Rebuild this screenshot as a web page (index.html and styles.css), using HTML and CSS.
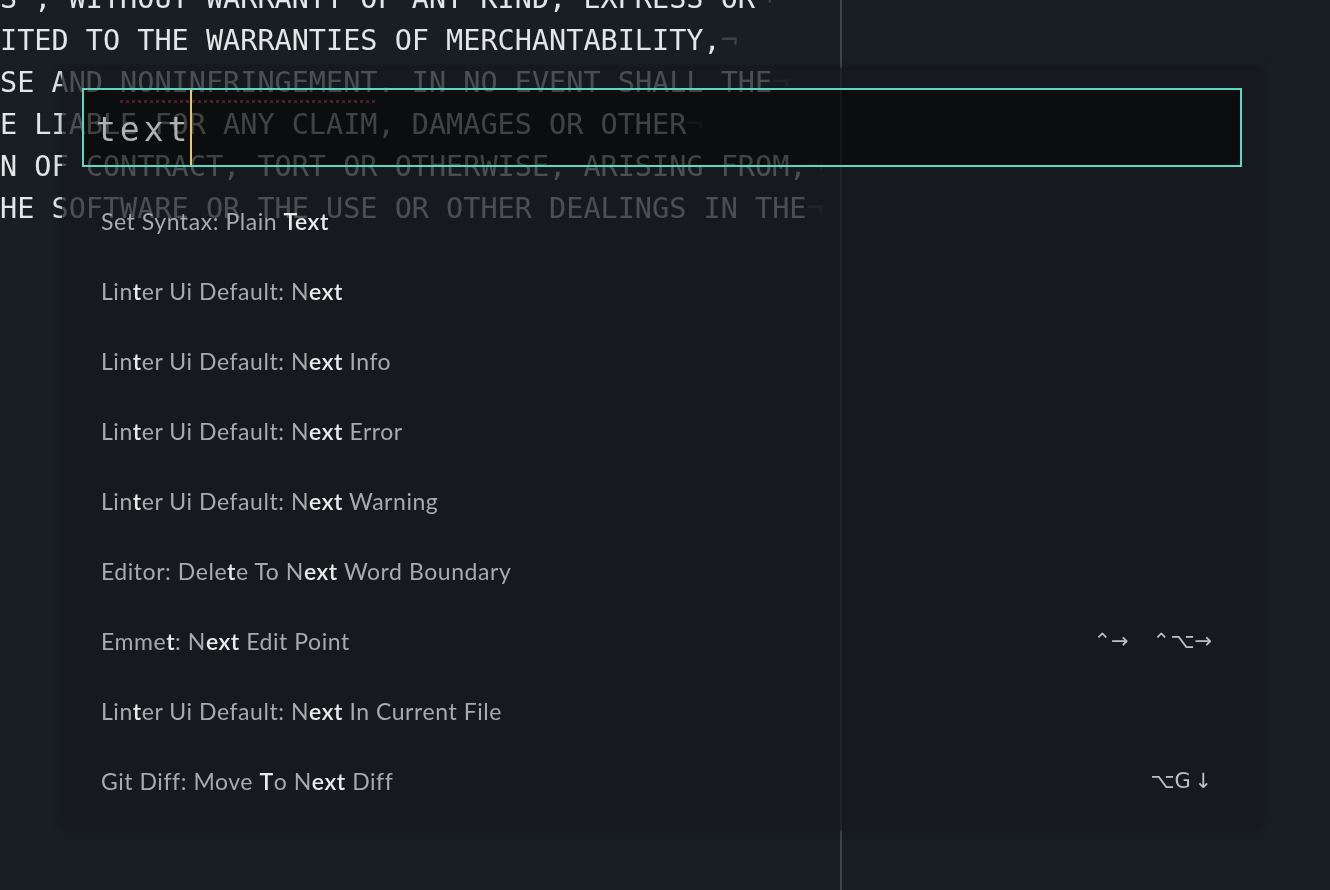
FILE: index.html
```html
<!DOCTYPE html>
<html lang="en">
<head>
<meta charset="utf-8">
<title>Command Palette</title>
<link rel="stylesheet" href="styles.css">
</head>
<body>
<div class="editor">
  <div class="lines">
    <div class="line">S", WITHOUT WARRANTY OF ANY KIND, EXPRESS OR<span class="eol">¬</span></div>
    <div class="line">ITED TO THE WARRANTIES OF MERCHANTABILITY,<span class="eol">¬</span></div>
    <div class="line">SE AND <span class="misspelled">NONINFRINGEMENT</span>. IN NO EVENT SHALL THE<span class="eol">¬</span></div>
    <div class="line">E LIABLE FOR ANY CLAIM, DAMAGES OR OTHER<span class="eol">¬</span></div>
    <div class="line">N OF CONTRACT, TORT OR OTHERWISE, ARISING FROM,<span class="eol">¬</span></div>
    <div class="line">HE SOFTWARE OR THE USE OR OTHER DEALINGS IN THE<span class="eol">¬</span></div>
  </div>
  <div class="wrap-guide"></div>

  <div class="palette">
    <div class="query">
      <span class="query-text">text</span><span class="caret"></span>
    </div>
    <ol class="items">
      <li class="item"><span class="label">Set Syntax: Plain <b>Text</b></span></li>
      <li class="item"><span class="label">Lin<b>t</b>er Ui Default: N<b>ext</b></span></li>
      <li class="item"><span class="label">Lin<b>t</b>er Ui Default: N<b>ext</b> Info</span></li>
      <li class="item"><span class="label">Lin<b>t</b>er Ui Default: N<b>ext</b> Error</span></li>
      <li class="item"><span class="label">Lin<b>t</b>er Ui Default: N<b>ext</b> Warning</span></li>
      <li class="item"><span class="label">Editor: Dele<b>t</b>e To N<b>ext</b> Word Boundary</span></li>
      <li class="item"><span class="label">Emme<b>t</b>: N<b>ext</b> Edit Point</span><span class="keys"><kbd class="key">⌃→</kbd><kbd class="key">⌃⌥→</kbd></span></li>
      <li class="item"><span class="label">Lin<b>t</b>er Ui Default: N<b>ext</b> In Current File</span></li>
      <li class="item"><span class="label">Git Diff: Move <b>T</b>o N<b>ext</b> Diff</span><span class="keys"><kbd class="key key-narrow">⌥G ↓</kbd></span></li>
    </ol>
  </div>
</div>
</body>
</html>
```

FILE: styles.css
```css
html, body {
  margin: 0;
  padding: 0;
  height: 100%;
  background: #181e22;
  overflow: hidden;
}

.editor {
  position: relative;
  width: 1330px;
  height: 890px;
  overflow: hidden;
  background: #181e22;
}

.lines {
  margin-top: -22px;
  font-family: "DejaVu Sans Mono", monospace;
  font-size: 28.5px;
  line-height: 42px;
  color: #e3e6e8;
}

.line {
  height: 42px;
  white-space: pre;
}

.eol {
  color: #3a4347;
}

.misspelled {
  text-decoration: underline dotted #ff6a6a;
  text-decoration-thickness: 3px;
  text-underline-offset: 8px;
}

.wrap-guide {
  position: absolute;
  top: 0;
  bottom: 0;
  left: 840px;
  width: 2px;
  background: #3c454a;
}

.palette {
  position: absolute;
  left: 62px;
  top: 68px;
  width: 1199px;
  box-sizing: border-box;
  padding: 20px 19px 14px 20px;
  background: rgba(21, 26, 30, 0.74);
  border-radius: 0 0 5px 5px;
  box-shadow: 0 0 8px 2px rgba(0, 0, 0, 0.22);
}

.query {
  position: relative;
  display: flex;
  align-items: center;
  height: 79px;
  box-sizing: border-box;
  border: 2px solid #5fd6bd;
  padding: 4px 0 0 12px;
}

.query::before {
  content: "";
  position: absolute;
  inset: 0;
  background: #0b0d0f;
  mix-blend-mode: difference;
}

.query-text {
  position: relative;
  font-family: "DejaVu Sans Mono", monospace;
  font-size: 33px;
  letter-spacing: 4px;
  color: #aeb2b4;
}

.caret {
  position: relative;
  align-self: stretch;
  width: 2px;
  margin-top: -4px;
  margin-left: -1px;
  background: #e6c96c;
}

.items {
  list-style: none;
  margin: 19px 0 0 0;
  padding: 0;
}

.item {
  display: flex;
  align-items: center;
  justify-content: space-between;
  height: 70px;
  padding: 0 30px 0 19px;
  font-family: "Lato", "Noto Sans", sans-serif;
  font-size: 23px;
  letter-spacing: 0.55px;
  color: #a7abae;
}

.label b {
  color: #e9ebec;
  font-weight: 600;
}

.keys {
  display: flex;
  gap: 24px;
}

.key {
  font-family: "DejaVu Sans", sans-serif;
  font-size: 21px;
  letter-spacing: 0;
  color: #bcc0c2;
}

.key-narrow {
  word-spacing: -3px;
}
```
